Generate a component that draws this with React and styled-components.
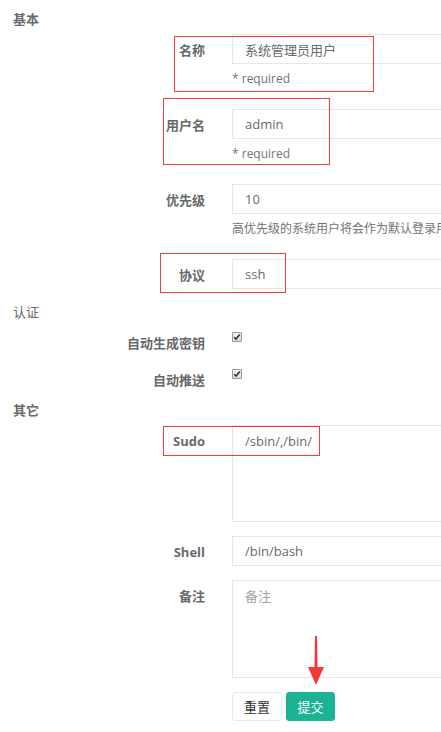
import styled, { createGlobalStyle } from "styled-components";

const GlobalStyle = createGlobalStyle`
  html, body {
    margin: 0;
    padding: 0;
    background: #ffffff;
    overflow: hidden;
  }
  body {
    font-family: "Open Sans", "Noto Sans CJK SC", sans-serif;
    font-size: 13px;
    color: #676a6c;
  }
`;

const Page = styled.form`
  width: 700px;
  padding-top: 10px;
  display: flex;
  flex-direction: column;
`;

const SectionTitle = styled.h3`
  margin: 0 0 6px 13px;
  font-size: 13px;
  line-height: 18px;
  font-weight: ${(p) => (p.$bold ? 700 : 400)};
  color: #676a6c;
`;

const Group = styled.div`
  position: relative;
  display: grid;
  grid-template-columns: 205px 400px;
  column-gap: 27px;
  margin-bottom: ${(p) => (p.$help ? "21px" : "14px")};
`;

const Label = styled.label`
  text-align: right;
  font-weight: 700;
  line-height: 18px;
  padding-top: 7px;
`;

const Field = styled.div`
  display: flex;
  flex-direction: column;
`;

const Input = styled.input`
  box-sizing: border-box;
  height: 30px;
  width: 100%;
  padding: 0 12px;
  border: 1px solid #e5e6e7;
  border-radius: 0;
  font-family: inherit;
  font-size: 13px;
  color: #676a6c;
  outline: none;
`;

const TextArea = styled.textarea`
  box-sizing: border-box;
  height: ${(p) => p.$h || 97}px;
  width: 100%;
  padding: 6px 12px;
  border: 1px solid #e5e6e7;
  font-family: inherit;
  font-size: 13px;
  line-height: 18px;
  color: #676a6c;
  resize: none;
  outline: none;

  &::placeholder {
    color: #a3a3a3;
  }
`;

const Help = styled.span`
  margin-top: 6px;
  font-size: 12px;
  line-height: 18px;
  white-space: nowrap;
  color: #737373;
`;

const CheckRow = styled.div`
  display: grid;
  grid-template-columns: 205px 400px;
  column-gap: 27px;
  height: 23px;
  margin-bottom: 14px;
`;

const CheckBox = styled.span`
  box-sizing: border-box;
  margin-top: 5px;
  width: 10px;
  height: 10px;
  border: 1px solid #9a9a9a;
  border-radius: 1px;
  background: linear-gradient(#f2f2f2, #d8d8d8);
  display: flex;
  align-items: center;
  justify-content: center;
`;

const Mark = styled.span`
  position: absolute;
  pointer-events: none;
  border: 1px solid #f23a3a;
  left: ${(p) => p.$x}px;
  top: ${(p) => p.$y}px;
  width: ${(p) => p.$w}px;
  height: ${(p) => p.$h}px;
`;

const Actions = styled.div`
  position: relative;
  grid-column: 2;
  display: flex;
  gap: 4px;
`;

const Button = styled.button`
  box-sizing: border-box;
  height: 29px;
  width: ${(p) => p.$w}px;
  padding: 0;
  border-radius: 3px;
  font-family: inherit;
  font-size: 13px;
  border: 1px solid ${(p) => (p.$primary ? "#1ab394" : "#e7eaec")};
  background: ${(p) => (p.$primary ? "#1ab394" : "#ffffff")};
  color: ${(p) => (p.$primary ? "#ffffff" : "#333333")};
`;

const Arrow = styled.svg`
  position: absolute;
  left: 75px;
  top: -56px;
`;

function Check() {
  return (
    <CheckBox>
      <svg width="8" height="8" viewBox="0 0 8 8">
        <path d="M1.2 4.2 L3 6 L6.8 1.6" fill="none" stroke="#333" strokeWidth="1.6" />
      </svg>
    </CheckBox>
  );
}

export default function App() {
  return (
    <>
      <GlobalStyle />
      <Page>
        <SectionTitle $bold>基本</SectionTitle>

        <Group $help>
          <Label>名称</Label>
          <Field>
            <Input defaultValue="系统管理员用户" />
            <Help>* required</Help>
          </Field>
          <Mark $x={174} $y={2} $w={198} $h={54} />
        </Group>

        <Group $help>
          <Label>用户名</Label>
          <Field>
            <Input defaultValue="admin" />
            <Help>* required</Help>
          </Field>
          <Mark $x={163} $y={-11} $w={165} $h={65} />
        </Group>

        <Group $help>
          <Label>优先级</Label>
          <Field>
            <Input defaultValue="10" />
            <Help>高优先级的系统用户将会作为默认登录用户</Help>
          </Field>
        </Group>

        <Group>
          <Label>协议</Label>
          <Field>
            <Input defaultValue="ssh" />
          </Field>
          <Mark $x={160} $y={-6} $w={124} $h={38} />
        </Group>

        <SectionTitle>认证</SectionTitle>

        <CheckRow>
          <Label>自动生成密钥</Label>
          <Check />
        </CheckRow>
        <CheckRow>
          <Label>自动推送</Label>
          <Check />
        </CheckRow>

        <SectionTitle $bold>其它</SectionTitle>

        <Group>
          <Label>Sudo</Label>
          <Field>
            <TextArea defaultValue="/sbin/,/bin/" />
          </Field>
          <Mark $x={163} $y={1} $w={155} $h={28} />
        </Group>

        <Group>
          <Label>Shell</Label>
          <Field>
            <Input defaultValue="/bin/bash" />
          </Field>
        </Group>

        <Group>
          <Label>备注</Label>
          <Field>
            <TextArea $h={98} placeholder="备注" />
          </Field>
        </Group>

        <Group>
          <Actions>
            <Button type="button" $w={50}>重置</Button>
            <Button type="button" $w={49} $primary>提交</Button>
            <Arrow width="18" height="50" viewBox="0 0 18 50">
              <path d="M8 0 L10 0 L10.6 31 L17 31 L9 49 L1 31 L7.4 31 Z" fill="#f23a3a" />
            </Arrow>
          </Actions>
        </Group>
      </Page>
    </>
  );
}
